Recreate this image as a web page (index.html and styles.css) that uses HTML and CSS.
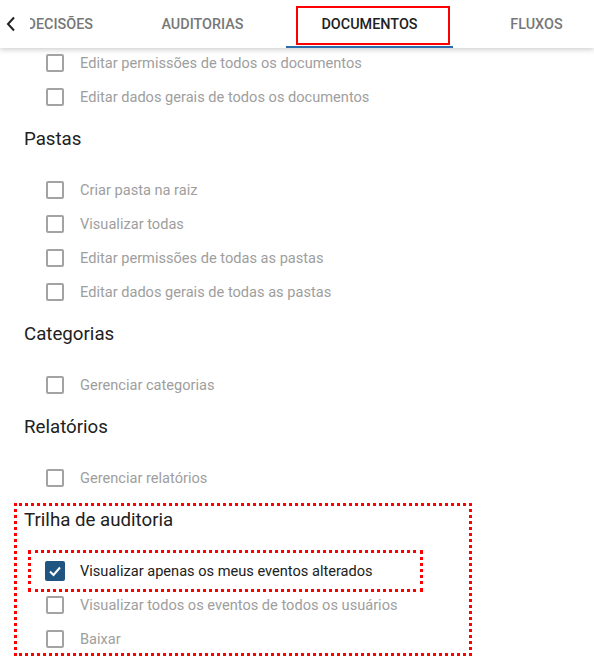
FILE: index.html
```html
<!DOCTYPE html>
<html lang="pt-BR">
<head>
  <meta charset="UTF-8" />
  <meta name="viewport" content="width=device-width, initial-scale=1.0" />
  <title>Permissões</title>
  <link rel="stylesheet" href="styles.css">
</head>
<body>
  <header class="tabbar">
    <button class="back" aria-label="Voltar">
      <svg width="10" height="16" viewBox="0 0 10 16"><polyline points="8,1.5 2,8 8,14.5" fill="none" stroke="#222" stroke-width="2" /></svg>
    </button>
    <nav class="tabs">
      <div class="track">
        <a class="tab tab-cut">DECISÕES</a>
        <a class="tab">AUDITORIAS</a>
        <a class="tab active">DOCUMENTOS</a>
        <a class="tab">FLUXOS</a>
      </div>
    </nav>
  </header>

  <main class="content">
    <section class="group">
      <div class="rows">
        <label class="row"><span class="box"></span>Editar permissões de todos os documentos</label>
        <label class="row"><span class="box"></span>Editar dados gerais de todos os documentos</label>
      </div>
    </section>

    <section class="group">
      <h2>Pastas</h2>
      <div class="rows">
        <label class="row"><span class="box"></span>Criar pasta na raiz</label>
        <label class="row"><span class="box"></span>Visualizar todas</label>
        <label class="row"><span class="box"></span>Editar permissões de todas as pastas</label>
        <label class="row"><span class="box"></span>Editar dados gerais de todas as pastas</label>
      </div>
    </section>

    <section class="group">
      <h2>Categorias</h2>
      <div class="rows">
        <label class="row"><span class="box"></span>Gerenciar categorias</label>
      </div>
    </section>

    <section class="group">
      <h2>Relatórios</h2>
      <div class="rows">
        <label class="row"><span class="box"></span>Gerenciar relatórios</label>
      </div>
    </section>

    <section class="group marked">
      <h2>Trilha de auditoria</h2>
      <div class="rows">
        <label class="row checked marked-row">
          <span class="box">
            <svg width="14" height="14" viewBox="0 0 14 14"><polyline points="2,7.5 5.5,11 12,3.5" fill="none" stroke="#fff" stroke-width="2" /></svg>
          </span>Visualizar apenas os meus eventos alterados</label>
        <label class="row"><span class="box"></span>Visualizar todos os eventos de todos os usuários</label>
        <label class="row"><span class="box"></span>Baixar</label>
      </div>
    </section>
  </main>
</body>
</html>
```

FILE: styles.css
```css
body {
  margin: 0;
  font-family: Roboto, 'Liberation Sans', sans-serif;
  background: #fff;
  color: #212121;
  overflow: hidden;
}
.tabbar {
  position: relative;
  z-index: 2;
  height: 48px;
  display: flex;
  background: #fff;
  box-shadow: 0 2px 5px rgba(0, 0, 0, 0.18);
}
.back {
  width: 30px;
  flex: 0 0 30px;
  border: none;
  background: none;
  padding: 0 0 0 6px;
  display: flex;
  align-items: center;
}
.tabs {
  flex: 1;
  overflow: hidden;
}
.track {
  display: flex;
  height: 100%;
  margin-left: -30px;
}
.tab {
  flex: 0 0 167px;
  display: flex;
  align-items: center;
  justify-content: center;
  font-size: 14.4px;
  font-weight: 500;
  color: #777;
  box-sizing: border-box;
  position: relative;
}
.tab-cut {
  flex-basis: 119px;
  justify-content: flex-end;
  padding-right: 26px;
}
.tab.active {
  color: #212121;
  border-bottom: 2px solid #2b6cab;
  padding-top: 2px;
}
.tab.active::before {
  content: "";
  position: absolute;
  top: 6px;
  left: 10px;
  right: 3px;
  height: 39px;
  box-sizing: border-box;
  border: 2px solid #f00;
}
.content {
  margin-top: -2px;
}
.group {
  position: relative;
}
.group h2 {
  margin: 0;
  padding: 10px 24px;
  font-size: 18.7px;
  font-weight: 400;
  line-height: 30px;
  color: #212121;
}
.group h2 + .rows {
  padding-top: 9px;
}
.row {
  position: relative;
  height: 34px;
  display: flex;
  align-items: center;
  gap: 16px;
  padding-left: 46px;
  font-size: 14.6px;
  color: #9e9e9e;
}
.box {
  width: 18px;
  height: 18px;
  box-sizing: border-box;
  border: 2px solid #a3a3a3;
  border-radius: 2px;
  display: flex;
  align-items: center;
  justify-content: center;
}
.row.checked {
  color: #212121;
}
.row.checked .box {
  width: 20px;
  height: 20px;
  margin-left: -1px;
  margin-right: -1px;
  border: none;
  background: #1f5580;
}
.marked::after {
  content: "";
  position: absolute;
  top: 8px;
  bottom: 0;
  left: 14px;
  width: 458px;
  border: 3px dotted #f00;
  box-sizing: border-box;
}
.marked-row::after {
  content: "";
  position: absolute;
  top: -4px;
  bottom: -4px;
  left: 28px;
  width: 395px;
  border: 3px dotted #f00;
  box-sizing: border-box;
}
```
